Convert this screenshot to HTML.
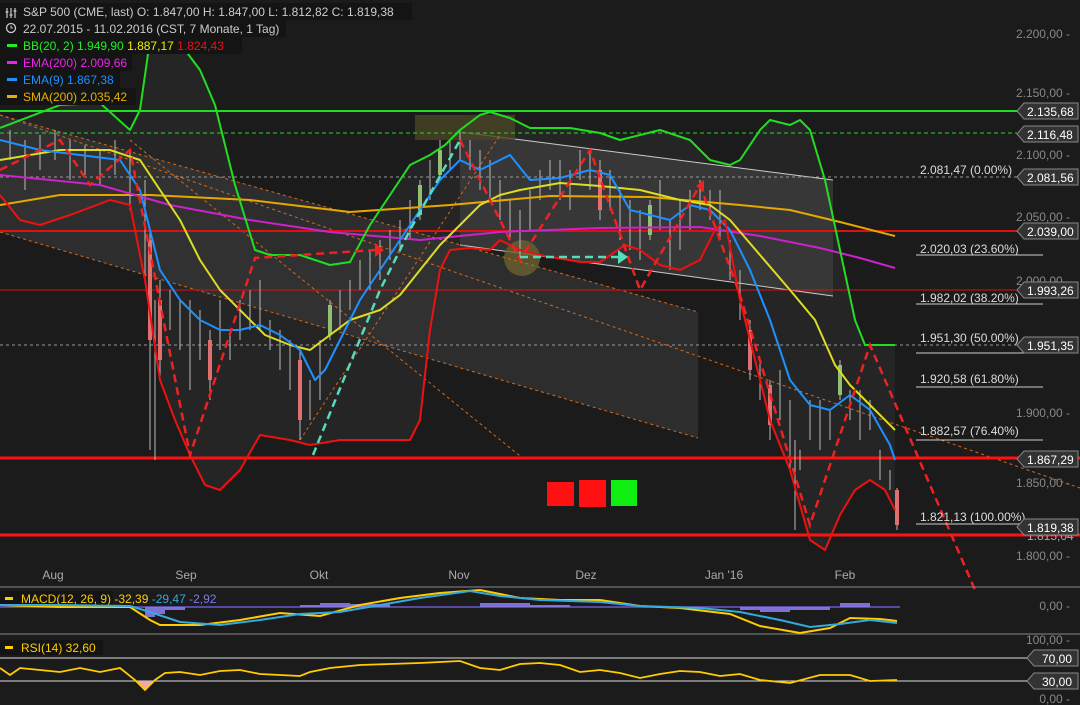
<!DOCTYPE html>
<html><head><meta charset="utf-8"><style>
html,body{margin:0;padding:0;background:#1c1b1b;}
svg{display:block;font-family:"Liberation Sans",sans-serif;}
</style></head><body>
<svg width="1080" height="705" viewBox="0 0 1080 705">
<rect width="1080" height="705" fill="#1c1b1b"/>
<!-- BB fill -->
<polygon fill="#252525" points="0,128 60,105 100,103 130,130 140,110 150,40 160,30 175,45 185,50 200,70 215,105 235,185 255,250 270,255 300,255 330,265 350,262 370,225 390,195 410,165 430,155 445,145 460,130 480,115 490,112 510,118 530,128 570,128 600,133 620,140 660,130 690,140 710,160 730,165 740,160 760,130 770,120 790,125 800,120 810,130 825,180 840,250 855,320 865,345 880,345 895,345 895,510 885,490 870,480 855,490 840,515 825,550 810,540 790,470 770,420 755,360 740,300 725,220 715,230 700,260 680,270 660,265 640,250 625,245 600,262 580,262 540,255 520,250 500,240 490,250 470,248 450,250 440,270 430,330 420,420 410,440 380,440 340,440 310,445 290,440 260,435 240,470 220,490 205,485 190,455 175,420 160,380 145,280 130,205 110,200 70,215 40,225 20,220 0,195"/>
<!-- channels -->
<polygon points="0,115 698,312 698,438 0,232" fill="#3a3a3a" opacity="0.6"/>
<polygon points="460,132 833,180 833,296 460,245" fill="#454545" opacity="0.6"/>
<line x1="460" y1="132" x2="833" y2="180" stroke="#ccc" stroke-width="1"/>
<line x1="460" y1="245" x2="833" y2="296" stroke="#ccc" stroke-width="1"/>
<rect x="415" y="115" width="100" height="25" fill="#4a4526" opacity="0.8"/>
<circle cx="522" cy="258" r="18" fill="#6b5f30" opacity="0.8"/>
<!-- orange thin dashed -->
<g stroke="#d2691e" stroke-width="1" stroke-dasharray="3,3" fill="none">
<line x1="0" y1="115" x2="1080" y2="488"/>
<line x1="0" y1="232" x2="698" y2="438"/>
<line x1="0" y1="115" x2="698" y2="312"/>
<line x1="130" y1="140" x2="525" y2="460"/>
<line x1="300" y1="440" x2="500" y2="135"/>
</g>
<!-- horizontal lines -->
<line x1="0" y1="111" x2="1017" y2="111" stroke="#22dd22" stroke-width="2"/>
<line x1="0" y1="133" x2="1017" y2="133" stroke="#22dd22" stroke-width="1" stroke-dasharray="4,3"/>
<line x1="0" y1="177" x2="1017" y2="177" stroke="#999" stroke-width="1" stroke-dasharray="3,3"/>
<line x1="0" y1="231" x2="1017" y2="231" stroke="#dd1111" stroke-width="2"/>
<line x1="0" y1="290" x2="1017" y2="290" stroke="#dd1111" stroke-width="1"/>
<line x1="0" y1="345" x2="1017" y2="345" stroke="#999" stroke-width="1" stroke-dasharray="3,3"/>
<line x1="0" y1="458" x2="1080" y2="458" stroke="#ff1111" stroke-width="3"/>
<line x1="0" y1="535" x2="1080" y2="535" stroke="#ff1111" stroke-width="3"/>
<!-- candles -->
<g stroke="#bbb" stroke-width="1">
<path d="M10,130V160M25,140V190M40,135V170M55,130V160M70,140V180M85,145V175M100,150V185M115,140V175M130,150V210M145,180V280M150,230V450M155,300V460M160,280V380M170,290V330M180,300V350M190,300V390M200,310V360M210,330V400M220,300V350M230,330V360M240,300V340M250,290V330M260,280V330M270,320V350M280,330V370M290,340V390M300,350V440M310,380V420M320,340V400M330,300V340M340,290V330M350,280V310M360,260V290M370,250V290M380,240V280M390,230V260M400,220V250M410,200V240M420,180V220M430,160V200M440,140V180M450,140V170M460,130V160M470,140V170M480,150V190M490,160V200M500,180V220M510,200V240M520,210V260M530,190V230M540,170V200M550,160V190M560,160V200M570,170V210M580,150V180M590,150V190M600,160V220M610,170V210M620,190V240M630,200V250M640,210V260M650,200V240M660,180V230M670,220V270M680,200V250M690,190V230M700,180V210M710,190V220M720,190V240M730,240V280M740,270V320M750,320V380M760,360V400M770,380V440M780,370V420M790,400V470M795,440V530M800,450V470M810,400V440M820,400V450M830,410V440M840,360V400M850,390V420M860,390V440M870,400V430M880,450V480M890,470V490M897,488V530"/>
</g>
<g fill="#e07070">
<rect x="148" y="240" width="4" height="100"/><rect x="158" y="300" width="4" height="60"/><rect x="208" y="340" width="4" height="40"/><rect x="298" y="360" width="4" height="60"/><rect x="598" y="170" width="4" height="40"/><rect x="748" y="330" width="4" height="40"/><rect x="768" y="385" width="4" height="40"/><rect x="895" y="490" width="4" height="35"/>
</g>
<g fill="#90c070">
<rect x="328" y="305" width="4" height="30"/><rect x="418" y="185" width="4" height="30"/><rect x="438" y="150" width="4" height="25"/><rect x="648" y="205" width="4" height="30"/><rect x="838" y="365" width="4" height="30"/>
</g>
<!-- indicator lines -->
<g fill="none" stroke-width="2" stroke-linejoin="round">
<polyline stroke="#e6a800" points="0,205 60,195 150,195 250,200 350,212 450,205 550,196 650,197 740,205 790,210 840,222 895,236"/>
<polyline stroke="#cc22cc" points="0,175 100,185 170,205 250,220 330,232 420,240 500,232 600,228 700,227 760,236 820,248 860,258 895,268"/>
<polyline stroke="#dddd22" points="0,160 60,150 110,150 140,160 160,190 180,220 200,260 220,290 240,310 265,335 290,345 310,350 330,335 350,320 380,310 400,295 420,270 440,245 460,225 480,205 500,195 520,190 560,183 600,186 640,190 680,200 710,205 730,220 760,255 790,290 815,320 835,365 850,385 875,410 895,430"/>
<polyline stroke="#1e90ff" points="0,140 40,150 80,155 120,160 140,190 160,270 180,300 200,320 220,330 240,330 260,325 280,335 300,350 315,380 325,370 340,340 360,300 380,270 400,240 420,210 440,180 460,160 480,170 500,160 510,155 530,180 560,178 590,170 610,175 630,210 650,215 670,220 690,205 710,210 730,230 750,270 770,320 790,380 810,405 830,410 850,395 870,410 890,445 895,460"/>
<polyline stroke="#22dd22" points="0,128 60,105 100,103 130,130 140,110 150,40 160,30 175,45 185,50 200,70 215,105 235,185 255,250 270,255 300,255 330,265 350,262 370,225 390,195 410,165 430,155 445,145 460,130 480,115 490,112 510,118 530,128 570,128 600,133 620,140 660,130 690,140 710,160 730,165 740,160 760,130 770,120 790,125 800,120 810,130 825,180 840,250 855,320 865,345 880,345 895,345"/>
<polyline stroke="#ee1111" points="0,195 20,220 40,225 70,215 110,200 130,205 145,280 160,380 175,420 190,455 205,485 220,490 240,470 260,435 290,440 310,445 340,440 380,440 410,440 420,420 430,330 440,270 450,250 470,248 490,250 500,240 520,250 540,255 580,262 600,262 625,245 640,250 660,265 680,270 700,260 715,230 725,220 740,300 755,360 770,420 790,470 810,540 825,550 840,515 855,490 870,480 885,490 895,510"/>
</g>
<!-- dashed zigzags -->
<g fill="none" stroke-width="2.5" stroke-dasharray="8,5">
<polyline stroke="#ee2222" points="0,170 60,140 90,185 130,150 190,455 255,258 375,250"/>
<polyline stroke="#55ddbb" points="313,455 380,290 410,230 460,140"/>
<polyline stroke="#ee2222" points="460,140 520,260 590,150 640,290 700,185 740,295 810,525 870,345 975,590"/>
<polyline stroke="#55ddbb" points="520,257 620,257"/>
</g>
<polygon points="375,243 375,257 384,250" fill="#ee2222"/>
<polygon points="618,250 618,264 628,257" fill="#55ddbb"/>
<polygon points="704,180 704,192 696,186" fill="#ee2222"/>
<!-- squares -->
<rect x="547" y="482" width="27" height="24" fill="#ff1111"/>
<rect x="579" y="480" width="27" height="27" fill="#ff1111"/>
<rect x="611" y="480" width="26" height="26" fill="#11ee11"/>
<!-- fib labels -->
<g fill="#ddd" font-size="12">
<text x="920" y="174">2.081,47 (0.00%)</text>
<text x="920" y="253">2.020,03 (23.60%)</text>
<text x="920" y="302">1.982,02 (38.20%)</text>
<text x="920" y="342">1.951,30 (50.00%)</text>
<text x="920" y="383">1.920,58 (61.80%)</text>
<text x="920" y="435">1.882,57 (76.40%)</text>
<text x="920" y="521">1.821,13 (100.00%)</text>
</g>
<g stroke="#ccc" stroke-width="1">
<line x1="916" y1="255" x2="1043" y2="255"/><line x1="916" y1="304" x2="1043" y2="304"/><line x1="916" y1="353" x2="1043" y2="353"/><line x1="916" y1="387" x2="1043" y2="387"/><line x1="916" y1="440" x2="1043" y2="440"/><line x1="916" y1="524" x2="1043" y2="524"/>
</g>
<!-- axis labels -->
<g fill="#888" font-size="12" text-anchor="end">
<text x="1070" y="38">2.200,00 -</text><text x="1070" y="97">2.150,00 -</text><text x="1070" y="159">2.100,00 -</text><text x="1070" y="221">2.050,00 -</text><text x="1070" y="285">2.000,00 -</text><text x="1070" y="417">1.900,00 -</text><text x="1070" y="487">1.850,00 -</text><text x="1070" y="560">1.800,00 -</text>
<text x="1070" y="610">0,00 -</text><text x="1070" y="644">100,00 -</text><text x="1070" y="703">0,00 -</text>
</g>
<!-- price tags -->
<g font-size="12" fill="#fff">
<g><polygon points="1017,111 1024,103 1078,103 1078,119 1024,119" fill="#333" stroke="#888"/><text x="1027" y="116">2.135,68</text></g>
<g><polygon points="1017,134 1024,126 1078,126 1078,142 1024,142" fill="#333" stroke="#888"/><text x="1027" y="139">2.116,48</text></g>
<g><polygon points="1017,177 1024,169 1078,169 1078,185 1024,185" fill="#333" stroke="#888"/><text x="1027" y="182">2.081,56</text></g>
<g><polygon points="1017,231 1024,223 1078,223 1078,239 1024,239" fill="#333" stroke="#888"/><text x="1027" y="236">2.039,00</text></g>
<g><polygon points="1017,290 1024,282 1078,282 1078,298 1024,298" fill="#333" stroke="#888"/><text x="1027" y="295">1.993,26</text></g>
<g><polygon points="1017,345 1024,337 1078,337 1078,353 1024,353" fill="#333" stroke="#888"/><text x="1027" y="350">1.951,35</text></g>
<g><polygon points="1017,459 1024,451 1078,451 1078,467 1024,467" fill="#333" stroke="#888"/><text x="1027" y="464">1.867,29</text></g>
<text x="1027" y="540" fill="#aaa">1.815,04</text>
<g><polygon points="1017,527 1024,519 1078,519 1078,535 1024,535" fill="#333" stroke="#888"/><text x="1027" y="532">1.819,38</text></g>
<g><polygon points="1027,658 1034,650 1078,650 1078,666 1034,666" fill="#333" stroke="#888"/><text x="1042" y="663">70,00</text></g>
<g><polygon points="1027,681 1034,673 1078,673 1078,689 1034,689" fill="#333" stroke="#888"/><text x="1042" y="686">30,00</text></g>
</g>
<!-- legend -->
<rect x="0" y="3" width="412" height="17" fill="#141414"/>
<rect x="0" y="20" width="286" height="17" fill="#141414"/>
<rect x="0" y="37" width="242" height="17" fill="#141414"/>
<rect x="0" y="54" width="132" height="17" fill="#141414"/>
<rect x="0" y="71" width="120" height="17" fill="#141414"/>
<rect x="0" y="88" width="136" height="17" fill="#141414"/>
<g stroke="#ccc" stroke-width="1.2" fill="none"><path d="M7,8V18M11,8V18M15,8V18"/><path d="M5.5,12h3M9.5,15h3M13.5,11h3"/></g>
<g font-size="12">
<text x="23" y="16" fill="#ccc">S&amp;P 500 (CME, last)  O: 1.847,00  H: 1.847,00  L: 1.812,82  C: 1.819,38</text>
<circle cx="11" cy="28" r="4.5" fill="none" stroke="#ccc" stroke-width="1.3"/><path d="M11,25.5V28H13" stroke="#ccc" fill="none"/>
<text x="23" y="33" fill="#ccc">22.07.2015 - 11.02.2016 (CST, 7 Monate, 1 Tag)</text>
<rect x="7" y="44" width="10" height="3" fill="#22ee22"/><text x="23" y="50" fill="#22ee22">BB(20, 2)  1.949,90 <tspan fill="#eeee00">1.887,17</tspan> <tspan fill="#ee1111">1.824,43</tspan></text>
<rect x="7" y="61" width="10" height="3" fill="#ee22ee"/><text x="23" y="67" fill="#ee22ee">EMA(200)  2.009,66</text>
<rect x="7" y="78" width="10" height="3" fill="#1e90ff"/><text x="23" y="84" fill="#1e90ff">EMA(9)  1.867,38</text>
<rect x="7" y="95" width="10" height="3" fill="#e6b000"/><text x="23" y="101" fill="#e6b000">SMA(200)  2.035,42</text>
</g>
<!-- x axis -->
<g fill="#aaa" font-size="12" text-anchor="middle">
<text x="53" y="579">Aug</text><text x="186" y="579">Sep</text><text x="319" y="579">Okt</text><text x="459" y="579">Nov</text><text x="586" y="579">Dez</text><text x="724" y="579">Jan '16</text><text x="845" y="579">Feb</text>
</g>
<line x1="0" y1="587" x2="1080" y2="587" stroke="#888"/>
<line x1="0" y1="634" x2="1080" y2="634" stroke="#888"/>
<!-- MACD -->
<line x1="0" y1="607" x2="900" y2="607" stroke="#6a5acd" stroke-width="1.5"/>
<path d="M145,607h10v10h-10zM155,607h10v7h-10zM165,607h20v3h-20zM300,607h20v-2h-20zM320,607h30v-4h-30zM350,607h40v-3h-40zM480,607h50v-4h-50zM530,607h40v-2h-40zM740,607h20v3h-20zM760,607h30v5h-30zM790,607h40v3h-40zM840,607h30v-4h-30z" fill="#8a7be8" opacity="0.9"/>
<rect x="0" y="591" width="113" height="15" fill="#141414"/>
<rect x="5" y="597" width="8" height="3" fill="#ffcc00"/>
<text x="21" y="603" font-size="12" fill="#ffcc00">MACD(12, 26, 9)  -32,39  <tspan fill="#33aadd">-29,47</tspan>  <tspan fill="#7b7be8">-2,92</tspan></text>
<polyline fill="none" stroke="#ffcc00" stroke-width="2" points="0,605 60,607 130,607 150,620 160,625 200,625 240,620 280,613 320,616 360,605 400,598 440,593 480,590 520,598 560,600 600,600 640,606 680,608 730,614 760,626 800,633 830,628 850,618 880,619 897,621"/>
<polyline fill="none" stroke="#33aadd" stroke-width="2" points="0,605 60,605 130,606 150,612 180,622 220,625 260,620 300,614 340,612 380,605 420,598 470,591 500,596 540,600 600,602 640,606 700,608 740,612 780,620 810,627 840,624 870,620 897,623"/>
<!-- RSI -->
<line x1="0" y1="658" x2="1027" y2="658" stroke="#ddd" stroke-width="1"/>
<line x1="0" y1="681" x2="1027" y2="681" stroke="#ddd" stroke-width="1"/>
<rect x="0" y="640" width="103" height="15" fill="#141414"/>
<rect x="5" y="646" width="8" height="3" fill="#ffcc00"/>
<text x="21" y="652" font-size="12" fill="#ffcc00">RSI(14)  32,60</text>
<polygon points="135,681 145,690 155,681" fill="#f4a6a6"/>
<polyline fill="none" stroke="#ffcc00" stroke-width="1.8" points="0,668 10,675 20,668 40,670 60,672 80,668 100,672 120,668 135,680 145,690 155,680 165,673 180,672 200,675 220,671 240,670 260,674 280,675 300,676 310,672 330,668 360,665 390,664 420,663 440,662 460,661 480,668 500,670 520,664 540,663 560,665 580,672 600,670 620,673 640,678 660,674 680,671 700,672 720,676 740,674 760,680 790,683 820,675 850,675 870,681 897,680"/>
</svg>
</body></html>
